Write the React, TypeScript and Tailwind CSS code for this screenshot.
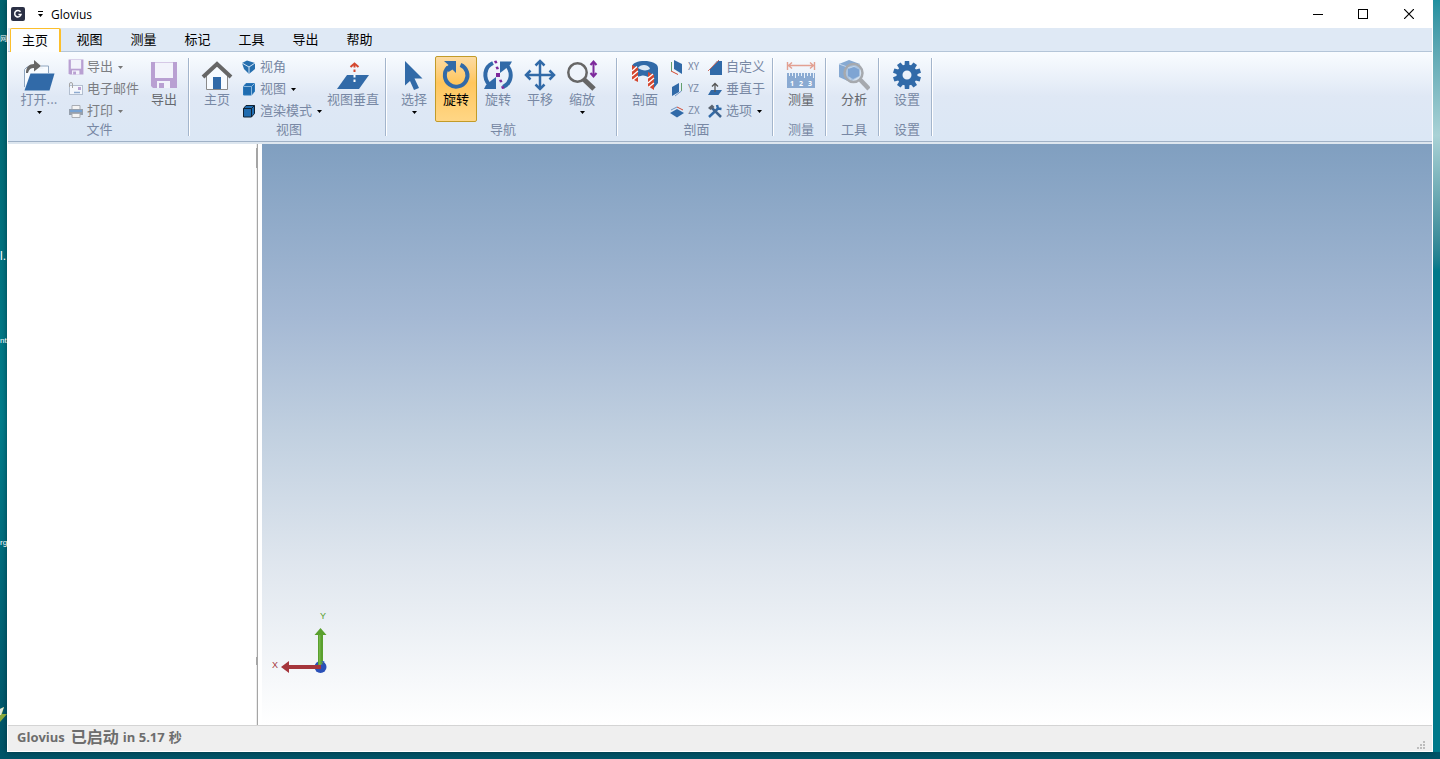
import type { ReactNode } from 'react';
import clsx from 'clsx';

const BLUE = '#316aa8';

const tabs = ['主页', '视图', '测量', '标记', '工具', '导出', '帮助'];

/* ---------- Icons ---------- */

function AppLogo() {
  return (
    <svg width="14" height="14" viewBox="0 0 14 14">
      <rect width="14" height="14" rx="2" fill="#2b3045" />
      <path d="M9.500 4.800A3.200 3.200 0 1 0 10 7.600H7.400" fill="none" stroke="#fff" strokeWidth="1.500" />
    </svg>
  );
}

function OpenIcon() {
  return (
    <svg width="32" height="32" viewBox="0 0 32 32">
      <path d="M1.500 28V10.500L4 8H9M18 7H25.500V14" fill="#f7fbff" stroke="#8fa6c0" />
      <path d="M2 10H25V15H7L2 28Z" fill="#f7fbff" />
      <path d="M7.500 14.500H31.500L26.500 31.500H1.500Z" fill={BLUE} />
      <path d="M3 14C3 8 6 5 11 5V1L18 7L11 12.500V9C8 9 6 10 5 14Z" fill="#666" />
    </svg>
  );
}

function FloppyIcon({ size }: { size: number }) {
  return (
    <svg width={size} height={size} viewBox="0 0 28 28">
      <path d="M1 1H27V27H3L1 25Z" fill="#b9a0d2" />
      <path d="M5 1.500H23V17H5Z" fill="#f2f3fb" />
      <path d="M7 20H20V27H7Z" fill="#f2f3fb" />
      <path d="M9 22H14V27H9Z" fill="#b9a0d2" />
    </svg>
  );
}

function MailIcon() {
  return (
    <svg width="16" height="16" viewBox="0 0 16 16">
      <rect x="1.500" y="4.500" width="13" height="9" fill="#f4f7fc" stroke="#b3bfd0" />
      <rect x="10" y="6" width="3" height="3" fill="#b9a0d2" />
      <path d="M6 11.500H12" stroke="#8fabd0" strokeWidth="1.500" />
      <path d="M1.500 6V3a1.500 1.500 0 0 1 3 0v4" fill="none" stroke="#a5a5a5" />
    </svg>
  );
}

function PrintIcon() {
  return (
    <svg width="16" height="16" viewBox="0 0 16 16">
      <path d="M4 2.500H12V7H4Z" fill="#f4f4f4" stroke="#a9adb4" />
      <path d="M1 6H15V12H1Z" fill="#96a0ad" />
      <path d="M2 7H14V9H2Z" fill="#78a2d2" />
      <path d="M4 10.500H12V14.500H4Z" fill="#f4f4f4" stroke="#a9adb4" />
    </svg>
  );
}

function HomeIcon() {
  return (
    <svg width="32" height="32" viewBox="0 0 32 32">
      <path d="M5.500 16V30.500H26.500V16L16 6Z" fill="#f7fbff" stroke="#8a8a8a" />
      <rect x="12" y="18" width="8" height="12" fill={BLUE} />
      <path d="M2 18L16 5L30 18" fill="none" stroke="#666" strokeWidth="4" />
    </svg>
  );
}

function CornerCubeIcon() {
  return (
    <svg width="16" height="16" viewBox="0 0 16 16">
      <path d="M1 4L6 1.500L14 4V10L8 15L3 10Z" fill="#266fae" />
      <path d="M1 4L8 8L14 4M8 8V15" stroke="#d4e5f5" fill="none" />
    </svg>
  );
}

function CubeIcon({ outlined }: { outlined?: boolean }) {
  const stroke = outlined ? '#102233' : '#8bb8de';
  return (
    <svg width="16" height="16" viewBox="0 0 16 16">
      <path d="M2.500 5.500L5 2.500H13.500V10.500L10.500 14H2.500Z" fill="#1f6cb0" stroke={outlined ? '#102233' : '#2b78ba'} />
      <path d="M2.500 5.500H10.500V14M10.500 5.500L13.500 2.500" fill="none" stroke={stroke} />
    </svg>
  );
}

function NormalViewIcon() {
  return (
    <svg width="32" height="32" viewBox="0 0 32 32">
      <path d="M10 16H32L22 30H0Z" fill={BLUE} />
      <path d="M17.500 6V15" stroke="#d4472f" strokeWidth="2" strokeDasharray="2.500 2" />
      <path d="M17.500 16V24" stroke="#fff" strokeWidth="2" strokeDasharray="2.500 2" />
      <path d="M13.500 8L17.500 4.500L21.500 8" fill="none" stroke="#d4472f" strokeWidth="2" />
    </svg>
  );
}

function CursorIcon() {
  return (
    <svg width="32" height="32" viewBox="0 0 32 32">
      <path d="M7 2L24.500 19.500H16.500L21 29L16 31L12 22L7 26.500Z" fill={BLUE} />
    </svg>
  );
}

function RotateIcon() {
  return (
    <svg width="32" height="32" viewBox="0 0 32 32">
      <path d="M20.500 5.900A11.300 11.300 0 1 1 8 8.500" fill="none" stroke={BLUE} strokeWidth="4" />
      <path d="M4 2H16V14L12.500 10.500L8.500 13L6 8L8.500 6Z" fill={BLUE} />
    </svg>
  );
}

function SpinAxisIcon() {
  return (
    <svg width="32" height="32" viewBox="0 0 32 32">
      <path d="M11 4C2 8 1 19 7.500 26" fill="none" stroke={BLUE} strokeWidth="4" />
      <path d="M2 30H14V18L10 21L4 26Z" fill={BLUE} />
      <path d="M21 28C30 24 31 13 24.500 6" fill="none" stroke={BLUE} strokeWidth="4" />
      <path d="M30 2.500H18V14L22 11L28 6Z" fill={BLUE} />
      <path d="M12 2l2.500-.5l1 2.500l-2.500.5ZM13.500 8l2.500-.5l1 2.500l-2.500.5ZM17 21l2.500-.5l1 2.500l-2.500.5ZM19 27.500l2.500-.5l1 2.500l-2.500.5Z" fill="#7d2a9c" />
      <rect x="14" y="14" width="4" height="4" fill="#7d2a9c" />
    </svg>
  );
}

function PanIcon() {
  return (
    <svg width="32" height="32" viewBox="0 0 32 32">
      <g fill="none" stroke={BLUE} strokeWidth="2.500">
        <path d="M16 2V30M2 16H30" />
        <path d="M11.500 6.500L16 2L20.500 6.500M11.500 25.500L16 30L20.500 25.500M6.500 11.500L2 16L6.500 20.500M25.500 11.500L30 16L25.500 20.500" />
      </g>
    </svg>
  );
}

function ZoomIcon() {
  return (
    <svg width="32" height="32" viewBox="0 0 32 32">
      <circle cx="11.500" cy="13.500" r="9.200" fill="#eef4fb" stroke="#666" strokeWidth="2.500" />
      <path d="M17.500 20L28 30" stroke="#666" strokeWidth="5" />
      <path d="M27.500 3V17M24.500 6L27.500 2.500L30.500 6M24.500 14L27.500 17.500L30.500 14" fill="none" stroke="#7d2a9c" strokeWidth="2" />
    </svg>
  );
}

function SectionIcon() {
  return (
    <svg width="32" height="32" viewBox="0 0 32 32">
      <path d="M3 8C3 0 29 0 29 9V24L25 29V17L19 14V18C16 16 13 16 9 18V10Z" fill={BLUE} />
      <path d="M9 9C11 5 20 5 21 10C18 12 13 12 9 9Z" fill="#dce8f5" />
      <path d="M3 6L9 9V23L3 20Z" fill="#d4472f" />
      <path d="M19 13L25 16V31L19 27Z" fill="#d4472f" />
      <path d="M3 12L8 7.500M3 17L9 12M4 21L9 17M19 19L24 15M19 24L25 19M20 28L25 24" stroke="#fff" strokeWidth="1.300" />
    </svg>
  );
}

function PlaneXYIcon() {
  return (
    <svg width="16" height="16" viewBox="0 0 16 16">
      <path d="M4 1L12 5V15L4 10Z" fill={BLUE} />
      <path d="M1.500 3V12" stroke="#62a06d" />
      <path d="M1 12L8 15.500" stroke="#d4472f" />
    </svg>
  );
}

function PlaneYZIcon() {
  return (
    <svg width="16" height="16" viewBox="0 0 16 16">
      <path d="M2 6L9 2V11L2 15Z" fill={BLUE} />
      <path d="M11.500 2V10" stroke="#62a06d" />
      <path d="M11.500 10L5 15" fill="none" stroke="#6d94c4" />
    </svg>
  );
}

function PlaneZXIcon() {
  return (
    <svg width="16" height="16" viewBox="0 0 16 16">
      <path d="M0 10L7 6L14 10L7 14.500Z" fill={BLUE} />
      <path d="M1 7L7 4" stroke="#6d94c4" />
      <path d="M7 4L13 7" stroke="#d4472f" />
    </svg>
  );
}

function CustomPlaneIcon() {
  return (
    <svg width="16" height="16" viewBox="0 0 16 16">
      <path d="M3 10L10 2H15V16H3Z" fill={BLUE} />
      <path d="M1 12L12 1" stroke="#c96d61" />
    </svg>
  );
}

function NormalPlaneIcon() {
  return (
    <svg width="16" height="16" viewBox="0 0 16 16">
      <path d="M4 9H15L11.500 14H1Z" fill={BLUE} />
      <path d="M8 11V3M5 5.500L8 2.500L11 5.500" fill="none" stroke="#555" strokeWidth="1.300" />
    </svg>
  );
}

function ToolsIcon() {
  return (
    <svg width="16" height="16" viewBox="0 0 16 16">
      <path d="M2 14L12 4.500M10 2L11 5.500L14.500 6" fill="none" stroke={BLUE} strokeWidth="2.500" />
      <path d="M4 4L14 14" stroke="#3f6490" strokeWidth="2.500" />
      <path d="M1 5L5 1.500L7.500 4L3.500 7Z" fill="#5b6470" />
    </svg>
  );
}

function MeasureIcon() {
  return (
    <svg width="32" height="32" viewBox="0 0 32 32">
      <path d="M2.500 3V11M29.500 3V11M3 6.500H29M7 3.500L3.500 6.500L7 9.500M25 3.500L28.500 6.500L25 9.500" fill="none" stroke="#e2a092" strokeWidth="1.400" />
      <rect x="2" y="14" width="28" height="15" fill="#8aaad2" />
      <path d="M4.500 14V17M7.500 14V17M10.500 14V19M13.500 14V17M16.500 14V17M19.500 14V19M22.500 14V17M25.500 14V17M28.500 14V19" stroke="#e8f0f9" />
      <g fill="#fff" className="font-['Open_Sans',sans-serif] text-[7px] font-bold">
        <text x="5" y="27">1</text>
        <text x="14" y="27">2</text>
        <text x="23" y="27">3</text>
      </g>
    </svg>
  );
}

function AnalyzeIcon() {
  return (
    <svg width="32" height="32" viewBox="0 0 32 32">
      <path d="M1 5L11 1L22 5V17L12 23L1 18Z" fill="#86a9d2" />
      <path d="M1 5L12 9L22 5M12 9V22" fill="none" stroke="#c3d6ec" />
      <circle cx="15.500" cy="14" r="9" fill="#c3d5ea" fillOpacity=".6" stroke="#a6a9ae" strokeWidth="2.500" />
      <path d="M10 10L16 8L21 10.500V17L15 20L10 17Z" fill="#7ea4d3" />
      <path d="M22 20.500L31 30" stroke="#a6a9ae" strokeWidth="4.500" />
    </svg>
  );
}

function GearIcon() {
  return (
    <svg width="32" height="32" viewBox="0 0 32 32">
      <circle cx="16" cy="16" r="7.500" fill="none" stroke={BLUE} strokeWidth="6" />
      {[0, 36, 72, 108, 144, 180, 216, 252, 288, 324].map((angle) => (
        <path key={angle} d="M13.500 7L13.800 2H18.200L18.500 7Z" fill={BLUE} transform={`rotate(${angle} 16 16)`} />
      ))}
    </svg>
  );
}

function Caret({ muted }: { muted?: boolean }) {
  return (
    <svg width="5" height="3" viewBox="0 0 5 3" className={muted ? 'text-[#777]' : 'text-black'}>
      <path d="M0 0H5L2.500 3Z" fill="currentColor" />
    </svg>
  );
}

/* ---------- Ribbon parts ---------- */

interface GroupProps {
  title: string;
  className: string;
  children: ReactNode;
}

function Group({ title, className, children }: GroupProps) {
  return (
    <section className={clsx('flex shrink-0', className)}>
      <div className="flex flex-1 flex-col">
        <div className="flex h-[66px] pl-[6px]">{children}</div>
        <h2 className="pl-[3px] text-center text-[13px] leading-[14px] text-[#7888a4]">{title}</h2>
      </div>
      <div className="mt-[2px] h-[78px] w-[2px] border-r border-l border-r-white border-l-[#a3b5cc]" />
    </section>
  );
}

interface BigButtonProps {
  icon: ReactNode;
  label: string;
  active?: boolean;
  menu?: boolean;
  wide?: boolean;
  gray?: boolean;
}

function BigButton({ icon, label, active, menu, wide, gray }: BigButtonProps) {
  return (
    <button
      aria-pressed={active}
      className={clsx(
        'flex h-[66px] shrink-0 flex-col items-center rounded-xs border pt-[2px] text-[13px] leading-4 whitespace-nowrap',
        wide ? 'w-[56px]' : 'w-[42px]',
        active
          ? 'border-[#c29b29] bg-linear-to-b from-[#fcdba2] from-0% via-[#ffc65c] via-40% to-[#ffd685] text-black'
          : 'border-transparent',
        !active && (gray ? 'text-[#66696f]' : 'text-[#7888a4]')
      )}
    >
      <span className="flex h-8 items-center">{icon}</span>
      <span>{label}</span>
      {menu && <span className="pt-1"><Caret /></span>}
    </button>
  );
}

interface SmallButtonProps {
  icon: ReactNode;
  label: string;
  menu?: boolean;
  gray?: boolean;
  latin?: boolean;
}

function SmallButton({ icon, label, menu, gray, latin }: SmallButtonProps) {
  return (
    <button
      className={clsx(
        'flex h-[22px] items-center leading-4 whitespace-nowrap',
        latin ? 'gap-[2px] text-[10px]' : 'gap-[3px] text-[13px]',
        gray ? 'text-[#7b7d82]' : 'text-[#7888a4]'
      )}
    >
      {icon}
      <span className="pb-[2px]">{label}</span>
      {menu && <span className="flex pl-[2px]"><Caret muted={gray} /></span>}
    </button>
  );
}

function Ribbon() {
  return (
    <div className="flex h-[90px] border-b border-[#9fb1c6] bg-linear-to-b from-[#f9fcff] via-[#dfe8f5] via-50% to-[#dbe7f5] pt-1">
      <Group title="文件" className="w-[182px]">
        <div className="flex pl-1">
          <BigButton icon={<OpenIcon />} label="打开..." menu />
          <div className="flex w-[83px] flex-col pl-2">
            <SmallButton icon={<FloppyIcon size={16} />} label="导出" menu gray />
            <SmallButton icon={<MailIcon />} label="电子邮件" gray />
            <SmallButton icon={<PrintIcon />} label="打印" menu gray />
          </div>
          <BigButton icon={<FloppyIcon size={28} />} label="导出" gray />
        </div>
      </Group>

      <Group title="视图" className="w-[197px]">
        <BigButton icon={<HomeIcon />} label="主页" />
        <div className="flex w-[87px] flex-col pl-[3px]">
          <SmallButton icon={<CornerCubeIcon />} label="视角" />
          <SmallButton icon={<CubeIcon />} label="视图" menu />
          <SmallButton icon={<CubeIcon outlined />} label="渲染模式" menu />
        </div>
        <BigButton icon={<NormalViewIcon />} label="视图垂直" wide />
      </Group>

      <Group title="导航" className="w-[231px]">
        <BigButton icon={<CursorIcon />} label="选择" menu />
        <BigButton icon={<RotateIcon />} label="旋转" active />
        <BigButton icon={<SpinAxisIcon />} label="旋转" />
        <BigButton icon={<PanIcon />} label="平移" />
        <BigButton icon={<ZoomIcon />} label="缩放" menu />
      </Group>

      <Group title="剖面" className="w-[156px]">
        <BigButton icon={<SectionIcon />} label="剖面" />
        <div className="flex w-[41px] flex-col pl-1">
          <SmallButton icon={<PlaneXYIcon />} label="XY" latin />
          <SmallButton icon={<PlaneYZIcon />} label="YZ" latin />
          <SmallButton icon={<PlaneZXIcon />} label="ZX" latin />
        </div>
        <div className="flex flex-col">
          <SmallButton icon={<CustomPlaneIcon />} label="自定义" />
          <SmallButton icon={<NormalPlaneIcon />} label="垂直于" />
          <SmallButton icon={<ToolsIcon />} label="选项" menu />
        </div>
      </Group>

      <Group title="测量" className="w-[53px]">
        <BigButton icon={<MeasureIcon />} label="测量" gray />
      </Group>
      <Group title="工具" className="w-[53px]">
        <BigButton icon={<AnalyzeIcon />} label="分析" gray />
      </Group>
      <Group title="设置" className="w-[53px]">
        <BigButton icon={<GearIcon />} label="设置" />
      </Group>
    </div>
  );
}

/* ---------- Window parts ---------- */

function TitleBar() {
  return (
    <header className="flex h-7 items-center bg-white pl-[3px]">
      <AppLogo />
      <button aria-label="Customize toolbar" className="ml-3 flex w-[7px] flex-col items-center gap-[2px]">
        <span className="h-px w-[5px] bg-black" />
        <Caret />
      </button>
      <h1 className="ml-[7px] flex-1 pt-px font-['Open_Sans',sans-serif] text-[12px] leading-4 text-black">Glovius</h1>
      <div className="flex">
        <button aria-label="Minimize" className="flex h-7 w-11 items-center justify-center">
          <span className="h-px w-[10px] bg-black" />
        </button>
        <button aria-label="Maximize" className="flex h-7 w-[46px] items-center justify-center">
          <span className="size-[10px] border border-black" />
        </button>
        <button aria-label="Close" className="flex h-7 w-[46px] items-center justify-center">
          <svg width="10" height="10" viewBox="0 0 10 10">
            <path d="M0 0L10 10M10 0L0 10" stroke="#000" strokeWidth="1.200" />
          </svg>
        </button>
      </div>
    </header>
  );
}

function TabBar() {
  return (
    <nav className="flex h-6 items-end gap-[3px] border-b border-[#b4c5d8] bg-[#dfe9f5] pl-[2px]">
      {tabs.map((tab, i) => (
        <button
          key={tab}
          className={clsx(
            'w-[51px] text-[13px] text-black',
            i === 0
              ? '-mb-px h-6 rounded-t-xs border border-r-2 border-b-0 border-[#fcbf2c] bg-[#fbfdff] pb-[2px] leading-5'
              : 'h-[23px] pb-px leading-[22px]'
          )}
        >
          {tab}
        </button>
      ))}
    </nav>
  );
}

function ModelTree() {
  return (
    <aside aria-label="Model tree" className="flex w-[250px] shrink-0 justify-end border-r border-[#a5a5a5] bg-white">
      <div className="flex w-px flex-col bg-[#ececec] pt-1">
        <span className="h-5 bg-[#a5a5a5]" />
        <span className="flex-1" />
        <span className="mb-[60px] h-2 bg-[#a5a5a5]" />
      </div>
    </aside>
  );
}

function AxisTriad() {
  return (
    <svg width="64" height="72" viewBox="0 0 64 72">
      <circle cx="52.500" cy="59" r="6" fill="#2a50b8" />
      <path d="M50 57V27H46.500L52.500 20L58.500 27H55V57Z" fill="#5aa02e" />
      <path d="M51 57V27H52.500V57Z" fill="#74b548" />
      <path d="M53 57H21V53L13 59L21 65V61H53Z" fill="#a5363c" />
      <g className="font-['Liberation_Sans',sans-serif] text-[9px]">
        <text x="4" y="60" fill="#a5363c">X</text>
        <text x="52" y="11" fill="#5aa02e">Y</text>
        <text x="53" y="57" fill="#2a50b8" className="text-[7px]">z</text>
      </g>
    </svg>
  );
}

function StatusBar() {
  return (
    <footer className="flex h-[26px] justify-between border-t border-[#d4d4d4] bg-[#efefef] pl-[9px]">
      <p className="flex items-center gap-1 pb-1 font-['Open_Sans','Noto_Sans_CJK_SC',sans-serif] text-[13px] leading-4 font-bold text-[#6d6d6d]">
        <span>Glovius</span>
        <span className="pl-[2px] text-[16px]">已启动</span>
        <span>in 5.17</span>
        <span>秒</span>
      </p>
      <svg width="12" height="25" viewBox="0 0 12 25" className="mr-1">
        <path d="M7 15h2v2H7ZM7 18h2v2H7ZM4 18h2v2H4ZM7 21h2v2H7ZM4 21h2v2H4ZM1 21h2v2H1Z" fill="#bdbdbd" />
      </svg>
    </footer>
  );
}

// Slivers of the desktop icons that stick out from behind the window
function DesktopLabels() {
  return (
    <div className="absolute inset-y-0 left-0 w-[7px] font-['Liberation_Sans','Noto_Sans_CJK_SC',sans-serif] text-[8px] leading-4 whitespace-nowrap text-white">
      <span className="absolute top-[31px] left-0 text-[7px]">网</span>
      <span className="absolute top-[248px] left-0 text-[12px]">l.</span>
      <span className="absolute top-[333px] left-0">nt</span>
      <span className="absolute top-[535px] left-0">rg</span>
      <svg width="7" height="16" viewBox="0 0 7 16" className="absolute top-[707px] left-0">
        <path d="M0 2L4 0L2 7H7L0 15Z" fill="#8aa93c" />
        <path d="M0 2L4 0L1 8H0Z" fill="#dfe8df" />
      </svg>
    </div>
  );
}

export default function App() {
  return (
    <div className="relative flex min-h-screen bg-linear-to-b from-[#00646f] via-[#007e8c] via-55% to-[#005468] font-['Noto_Sans_CJK_SC',sans-serif]">
      <DesktopLabels />
      <div className="mb-[7px] ml-[7px] flex min-w-0 flex-1 flex-col border border-t-0 border-white bg-white shadow-[0_0_6px_rgba(0,30,40,0.6)]">
        <TitleBar />
        <TabBar />
        <Ribbon />
        <main className="flex flex-1 border-t-2 border-[#dde6ef]">
          <ModelTree />
          <div className="w-1 shrink-0 bg-white" />
          <div className="flex flex-1 items-end bg-[linear-gradient(#809fc0,#a5b9d4_30%,#c1d0e0_50%,#dfe6ee_72%,#ffffff)] pb-[45px] pl-[6px]">
            <AxisTriad />
          </div>
        </main>
        <StatusBar />
      </div>
      <div className="mb-[7px] w-[7px] shrink-0 bg-linear-to-b from-[#1f8f9f] via-[#a9d2d6] via-18% to-[#00798a] to-36%" />
    </div>
  );
}
